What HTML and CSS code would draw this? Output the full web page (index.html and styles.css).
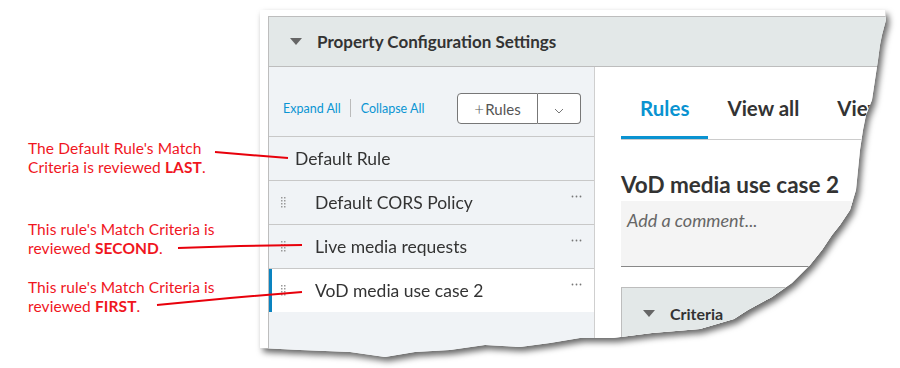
FILE: index.html
```html
<!DOCTYPE html>
<html lang="en">
  <head>
    <meta charset="UTF-8" />
    <title>Rule order</title>
    <link rel="stylesheet" href="styles.css">
  </head>
  <body>
    <div class="page">
      <div class="notes">
        <p class="note note-last">The Default Rule's Match<br />Criteria is reviewed <b>LAST</b>.</p>
        <p class="note note-second">This rule's Match Criteria is<br />reviewed <b>SECOND</b>.</p>
        <p class="note note-first">This rule's Match Criteria is<br />reviewed <b>FIRST</b>.</p>
      </div>

      <div class="shadow">
        <div class="sheet">
          <div class="panel">
            <div class="panel-head">
              <span class="caret"></span>
              Property Configuration Settings
            </div>
            <div class="panel-body">
              <div class="tree">
                <div class="toolbar">
                  <a class="link">Expand All</a>
                  <span class="sep"></span>
                  <a class="link">Collapse All</a>
                  <div class="btn-group">
                    <button class="btn btn-main"><span class="plus">+</span>Rules</button>
                    <button class="btn btn-drop">
                      <svg width="10" height="6" viewBox="0 0 10 6"><path d="M1 1 L5 5 L9 1" fill="none" stroke="#777" stroke-width="1"/></svg>
                    </button>
                  </div>
                </div>
                <div class="rule rule-default">Default Rule</div>
                <div class="rule">
                  <svg class="grip" width="5" height="11" viewBox="0 0 5 11"><g fill="#999"><rect x="0" y="0" width="1.5" height="1.5"/><rect x="3" y="0" width="1.5" height="1.5"/><rect x="0" y="3" width="1.5" height="1.5"/><rect x="3" y="3" width="1.5" height="1.5"/><rect x="0" y="6" width="1.5" height="1.5"/><rect x="3" y="6" width="1.5" height="1.5"/><rect x="0" y="9" width="1.5" height="1.5"/><rect x="3" y="9" width="1.5" height="1.5"/></g></svg>
                  <span class="rule-name">Default CORS Policy</span>
                  <svg class="more" width="11" height="3" viewBox="0 0 11 3"><g fill="#777"><circle cx="1.5" cy="1.5" r="0.9"/><circle cx="5.5" cy="1.5" r="0.9"/><circle cx="9.5" cy="1.5" r="0.9"/></g></svg>
                </div>
                <div class="rule">
                  <svg class="grip" width="5" height="11" viewBox="0 0 5 11"><g fill="#999"><rect x="0" y="0" width="1.5" height="1.5"/><rect x="3" y="0" width="1.5" height="1.5"/><rect x="0" y="3" width="1.5" height="1.5"/><rect x="3" y="3" width="1.5" height="1.5"/><rect x="0" y="6" width="1.5" height="1.5"/><rect x="3" y="6" width="1.5" height="1.5"/><rect x="0" y="9" width="1.5" height="1.5"/><rect x="3" y="9" width="1.5" height="1.5"/></g></svg>
                  <span class="rule-name">Live media requests</span>
                  <svg class="more" width="11" height="3" viewBox="0 0 11 3"><g fill="#777"><circle cx="1.5" cy="1.5" r="0.9"/><circle cx="5.5" cy="1.5" r="0.9"/><circle cx="9.5" cy="1.5" r="0.9"/></g></svg>
                </div>
                <div class="rule rule-active">
                  <svg class="grip" width="5" height="11" viewBox="0 0 5 11"><g fill="#999"><rect x="0" y="0" width="1.5" height="1.5"/><rect x="3" y="0" width="1.5" height="1.5"/><rect x="0" y="3" width="1.5" height="1.5"/><rect x="3" y="3" width="1.5" height="1.5"/><rect x="0" y="6" width="1.5" height="1.5"/><rect x="3" y="6" width="1.5" height="1.5"/><rect x="0" y="9" width="1.5" height="1.5"/><rect x="3" y="9" width="1.5" height="1.5"/></g></svg>
                  <span class="rule-name">VoD media use case 2</span>
                  <svg class="more" width="11" height="3" viewBox="0 0 11 3"><g fill="#777"><circle cx="1.5" cy="1.5" r="0.9"/><circle cx="5.5" cy="1.5" r="0.9"/><circle cx="9.5" cy="1.5" r="0.9"/></g></svg>
                </div>
              </div>

              <div class="detail">
                <div class="tabs">
                  <span class="tab tab-active">Rules</span>
                  <span class="tab">View all</span>
                  <span class="tab">View only</span>
                </div>
                <h2 class="rule-title">VoD media use case 2</h2>
                <div class="comment">Add a comment...</div>
                <div class="criteria">
                  <span class="caret"></span>
                  Criteria
                </div>
              </div>
            </div>
          </div>
        </div>
      </div>

      <svg class="pointers" width="900" height="368" viewBox="0 0 900 368">
        <path d="M215 152 L250 155 L288 158" />
        <path d="M178 248 L240 246 L302 245" />
        <path d="M157 305 L230 298 L302 292" />
      </svg>
    </div>
  </body>
</html>
```

FILE: styles.css
```css
/* annotated screenshot of the rule tree */
body {
  margin: 0;
  background: #fff;
  font-family: Lato, "Open Sans", sans-serif;
  color: #333;
}

.page {
  position: relative;
  display: flex;
  width: 900px;
  height: 368px;
  overflow: hidden;
}

/* red notes on the left */
.notes {
  width: 260px;
  flex: none;
  padding-left: 28px;
  box-sizing: border-box;
}

.note {
  margin: 0;
  font-family: Lato, sans-serif;
  font-size: 15.5px;
  line-height: 19px;
  color: #f0161e;
  letter-spacing: 0.1px;
}

.note b {
  font-weight: 700;
}

.note-last {
  margin-top: 139px;
}

.note-second {
  margin-top: 43px;
}

.note-first {
  margin-top: 20px;
}

.pointers {
  position: absolute;
  top: 0;
  left: 0;
  pointer-events: none;
}

.pointers path {
  fill: none;
  stroke: #e8000b;
  stroke-width: 2;
}

/* torn sheet */
.shadow {
  margin-top: 10px;
  filter: drop-shadow(3px 4px 3px rgba(0, 0, 0, 0.6));
}

.sheet {
  width: 630px;
  height: 350px;
  padding: 6px 0 0 8px;
  box-sizing: border-box;
  background: #fff;
  clip-path: polygon(
    0 0, 625px 0, 626px 10px, 622px 25px, 620px 35px, 618px 50px,
    615px 70px, 612px 90px, 606px 105px, 603px 120px, 600px 140px,
    598px 160px, 596px 180px, 590px 200px, 580px 215px, 572px 225px,
    562px 240px, 550px 255px, 532px 273px, 512px 287px, 488px 300px,
    474px 309px, 440px 319px, 392px 323px, 353px 328px, 320px 328px,
    290px 333px, 260px 337px, 225px 335px, 190px 340px, 155px 342px,
    125px 347px, 90px 342px, 40px 340px, 0 338px
  );
}

.panel {
  border: 1px solid #bdbdbd;
  height: 400px;
}

.panel-head {
  display: flex;
  align-items: center;
  height: 49px;
  padding-left: 21px;
  background: #e3e8e8;
  border-bottom: 1px solid #bdbdbd;
  font-size: 17px;
  font-weight: 700;
  color: #333;
}

.caret {
  display: inline-block;
  width: 0;
  height: 0;
  margin-right: 15px;
  border-left: 6px solid transparent;
  border-right: 6px solid transparent;
  border-top: 7px solid #666;
}

.panel-body {
  display: grid;
  grid-template-columns: 326px 1fr;
  height: 350px;
}

/* left tree */
.tree {
  background: #f0f3f6;
  border-right: 1px solid #cfcfcf;
}

.toolbar {
  display: flex;
  align-items: center;
  height: 70px;
  padding: 13px 13px 0 14px;
  box-sizing: border-box;
  border-bottom: 1px solid #c8c8c8;
}

.link {
  font-size: 12.5px;
  color: #0a95d3;
}

.sep {
  width: 1px;
  height: 18px;
  margin: 0 10px 0 9px;
  background: #bbb;
}

.btn-group {
  display: flex;
  margin-left: auto;
}

.btn {
  height: 31px;
  background: #fff;
  border: 1px solid #777;
  font-family: Lato, sans-serif;
  font-size: 15px;
  font-weight: 400;
  color: #555;
  padding: 0;
}

.plus {
  font-weight: 300;
  font-size: 17px;
  margin-right: 1px;
}

.btn-main {
  width: 81px;
  border-radius: 4px 0 0 4px;
}

.btn-drop {
  width: 43px;
  border-left: none;
  border-radius: 0 4px 4px 0;
}

.rule {
  display: flex;
  align-items: center;
  height: 43px;
  padding: 0 12px 0 12px;
  border-bottom: 1px solid #c8c8c8;
  font-size: 17.5px;
  color: #333;
}

.rule-default {
  padding-left: 26px;
}

.rule-active {
  background: #fff;
  border-left: 3px solid #0a83c0;
  padding-left: 9px;
  border-bottom: none;
}

.grip {
  flex: none;
  margin-right: 29px;
}

.rule-name {
  flex: 1;
}

.more {
  flex: none;
  margin-top: -12px;
}

/* right detail */
.detail {
  padding-left: 26px;
  background: #fff;
}

.tabs {
  display: flex;
  height: 72px;
  align-items: flex-end;
  border-bottom: 1px solid #ccc;
  white-space: nowrap;
}

.tab {
  padding: 0 19px 19px;
  font-size: 20.5px;
  font-weight: 700;
  color: #333;
}

.tab-active {
  color: #0a93d1;
  border-bottom: 3px solid #0a93d1;
  padding-bottom: 16px;
}

.rule-title {
  margin: 31px 0 0;
  font-size: 22.5px;
  line-height: 28px;
  font-weight: 700;
  color: #333;
  white-space: nowrap;
}

.comment {
  height: 66px;
  margin-top: 2px;
  padding: 8px 6px 0;
  box-sizing: border-box;
  background: #f4f4f4;
  border-bottom: 1px solid #888;
  font-size: 18px;
  font-style: italic;
  color: #666;
}

.criteria {
  display: flex;
  align-items: center;
  height: 50px;
  margin-top: 20px;
  padding-left: 21px;
  background: #e3e8e8;
  border-top: 1px solid #bdbdbd;
  border-left: 1px solid #bdbdbd;
  font-size: 16px;
  font-weight: 700;
  color: #333;
}
```
